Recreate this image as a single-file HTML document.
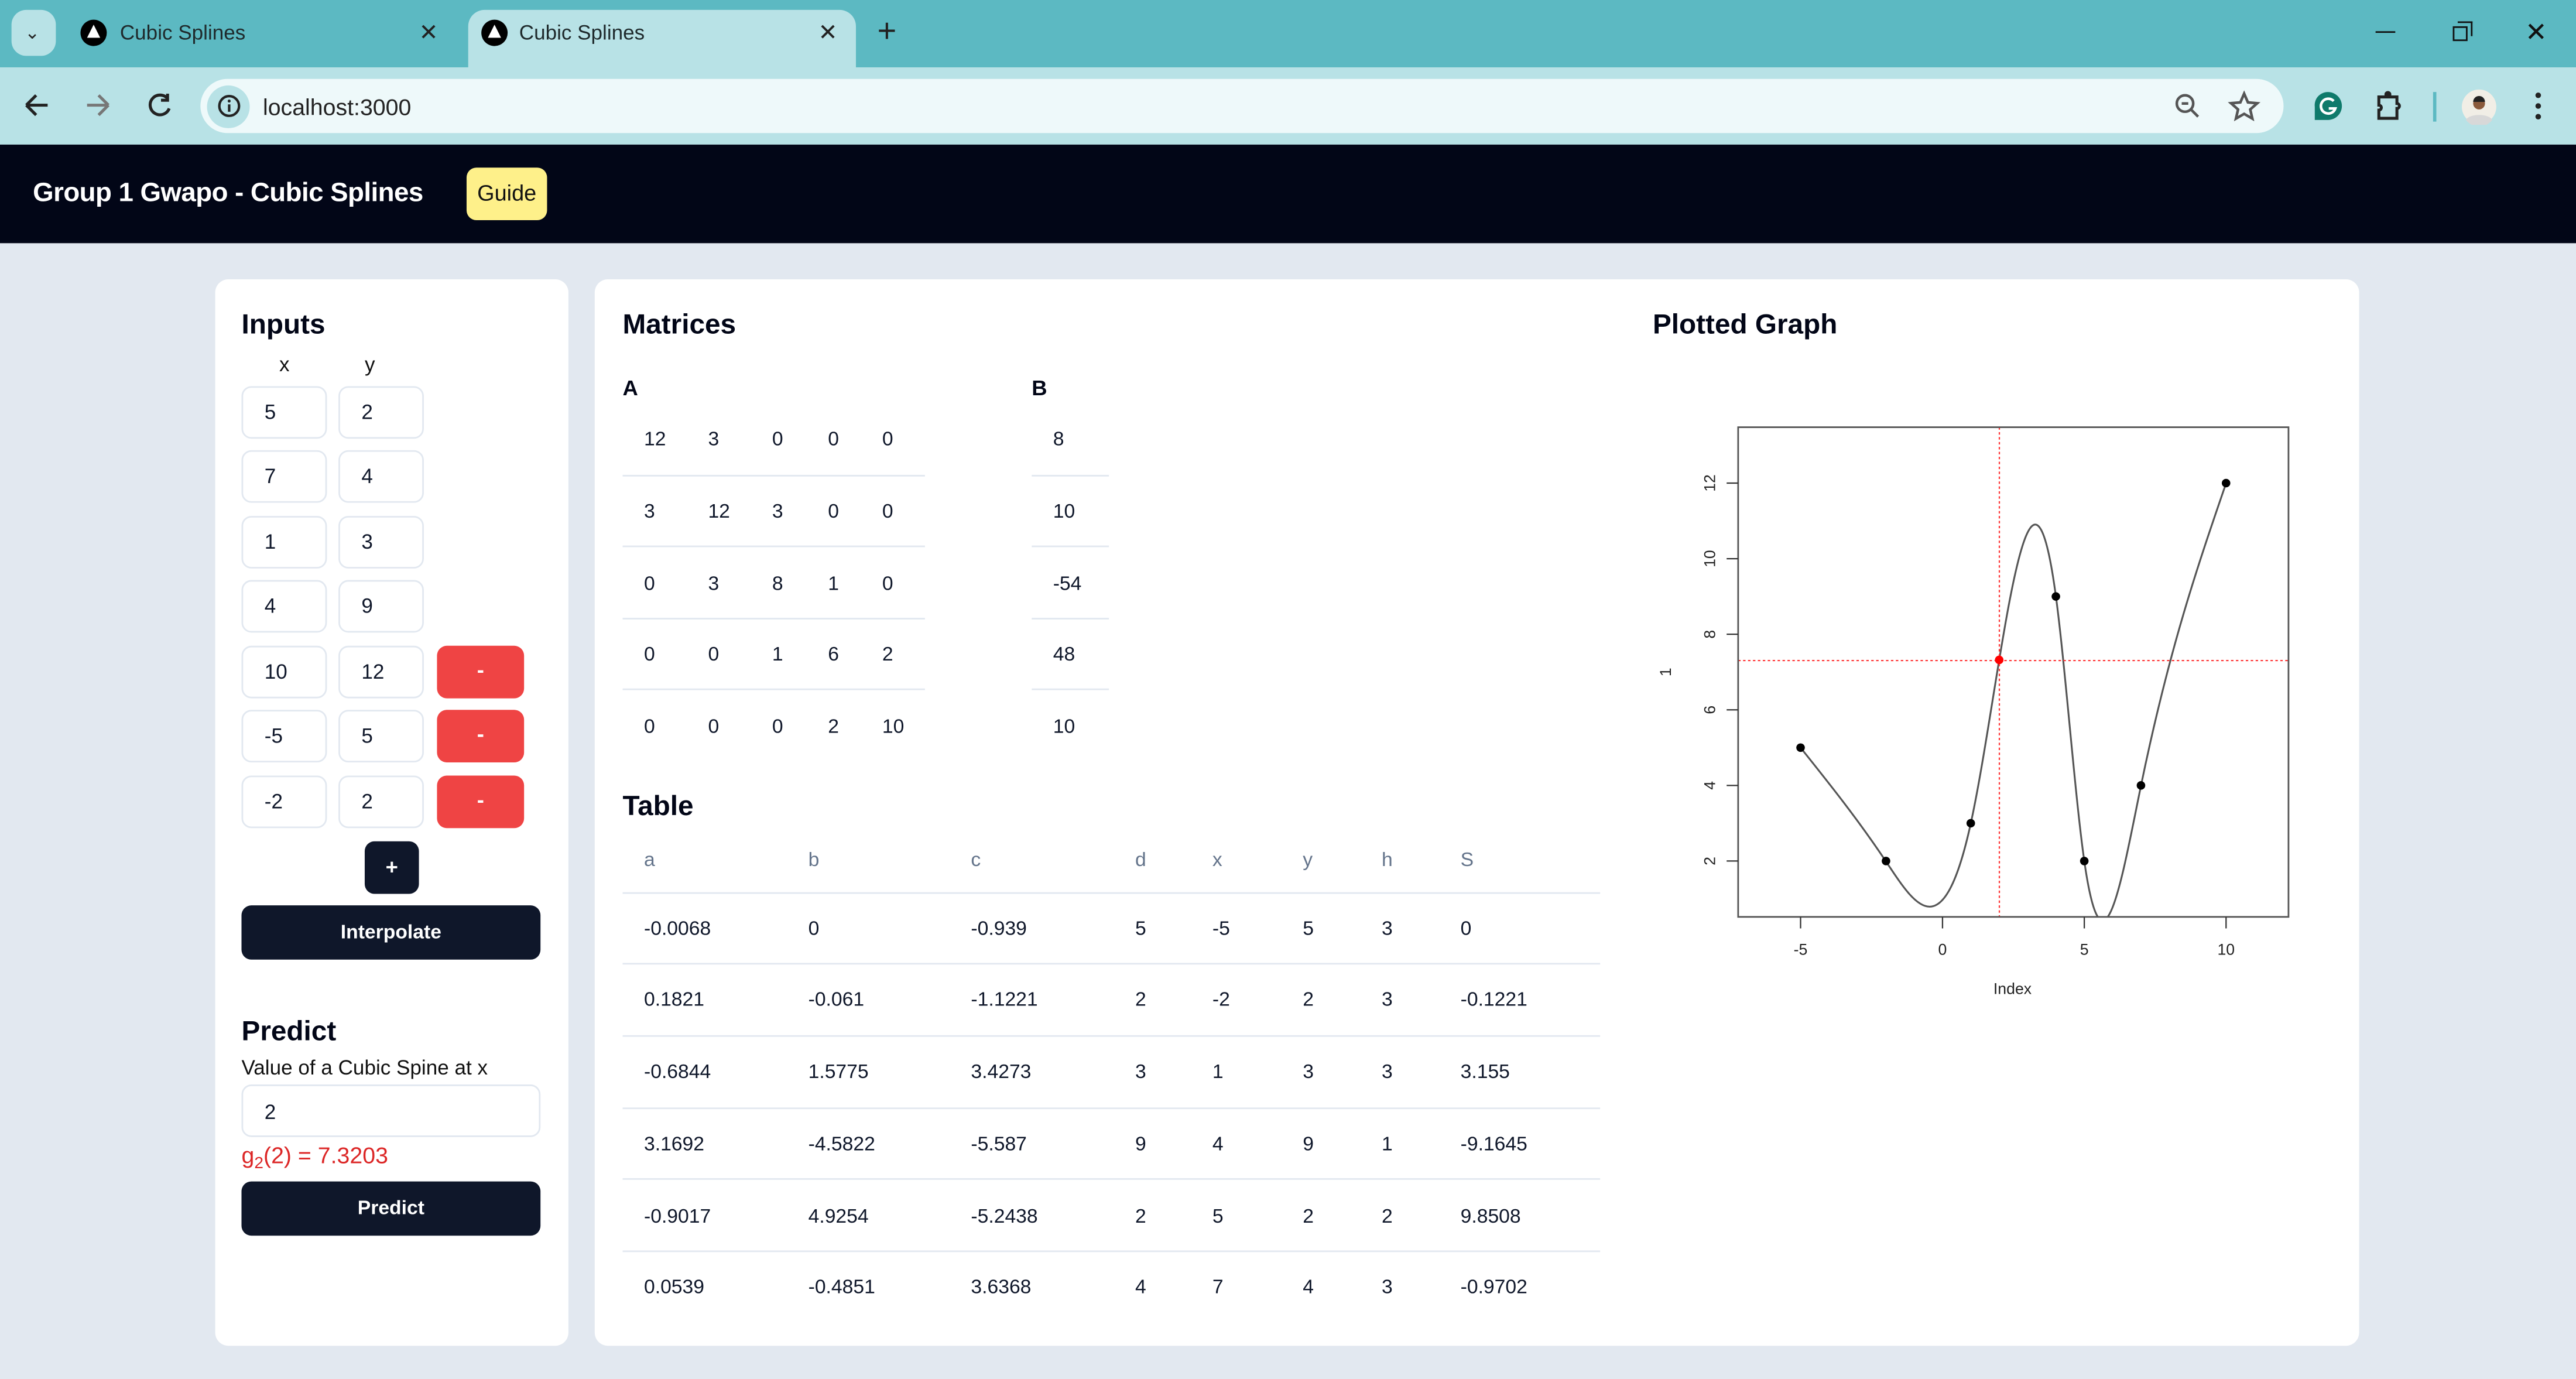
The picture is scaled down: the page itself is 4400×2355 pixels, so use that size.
<!DOCTYPE html>
<html><head><meta charset="utf-8"><style>
*{margin:0;padding:0;box-sizing:border-box}
html,body{width:4400px;height:2355px;overflow:hidden;background:#e2e8f0}
#w{position:absolute;left:0;top:0;width:1568px;height:839.3px;transform:scale(2.80612);transform-origin:0 0;font-family:"Liberation Sans",Arial,sans-serif;background:#e2e8f0}
.a{position:absolute}
.t{position:absolute;white-space:nowrap;transform:translateY(-50%)}
.card{position:absolute;background:#fff;border-radius:8px}
.in{position:absolute;width:52px;height:32px;border:1px solid #e2e8f0;border-radius:6px;font-size:12.5px;color:#0f172a;padding-left:13px;line-height:30px}
.red{position:absolute;left:266px;width:53px;height:32px;background:#ef4444;border-radius:6px;color:#fff;text-align:center;line-height:30px;font-size:13px;font-weight:bold}
.btn{position:absolute;background:#0f172a;border-radius:6px;color:#fff;text-align:center;font-weight:bold;font-size:12px}
.h{font-weight:bold;font-size:17px;color:#020617}
.n{font-size:12px;color:#0f172a}
.g{font-size:12px;color:#64748b}
.ln{position:absolute;height:1px;background:#e2e8f0}
</style></head><body><div id="w">
<!-- browser chrome -->
<div class="a" style="left:0;top:0;width:1568px;height:41px;background:#5cb9c2"></div>
<div class="a" style="left:7px;top:6px;width:27px;height:28px;background:#b8e2e6;border-radius:9px"></div>
<div class="t" style="left:15px;top:20px;font-size:11px;color:#222">&#8964;</div>
<div class="a" style="left:285px;top:6px;width:236px;height:40px;background:#b8e2e6;border-radius:10px 10px 0 0"></div>
<svg class="a" style="left:48px;top:11px" width="18" height="18"><circle cx="9" cy="9" r="8" fill="#000"/><path d="M9 4 L13 12 H5Z" fill="#fff"/></svg>
<svg class="a" style="left:292px;top:11px" width="18" height="18"><circle cx="9" cy="9" r="8" fill="#000"/><path d="M9 4 L13 12 H5Z" fill="#fff"/></svg>
<div class="t" style="left:73px;top:20px;font-size:12.5px;color:#1f2a2c">Cubic Splines</div>
<div class="t" style="left:316px;top:20px;font-size:12.5px;color:#1f2a2c">Cubic Splines</div>
<div class="t" style="left:255px;top:20px;font-size:14px;color:#222">&#10005;</div>
<div class="t" style="left:498px;top:20px;font-size:14px;color:#222">&#10005;</div>
<div class="t" style="left:534px;top:20px;font-size:20px;color:#222">+</div>
<div class="a" style="left:1446px;top:19px;width:12px;height:1.3px;background:#111"></div>
<div class="a" style="left:1493px;top:16px;width:9px;height:9px;border:1.2px solid #111"></div>
<div class="a" style="left:1496px;top:13px;width:9px;height:9px;border-top:1.2px solid #111;border-right:1.2px solid #111"></div>
<div class="t" style="left:1537px;top:20px;font-size:16px;color:#111">&#10005;</div>
<div class="a" style="left:0;top:41px;width:1568px;height:47px;background:#b8e2e6"></div>
<svg class="a" style="left:12px;top:55px" width="100" height="20" fill="none" stroke="#222" stroke-width="1.8"><path d="M4 9H17M4 9L10 3M4 9L10 15"/><path d="M41 9H54M54 9L48 3M54 9L48 15" stroke="#777"/><path d="M90 5A6 6 0 1 0 91 11M90 2V6H86"/></svg>
<div class="a" style="left:122px;top:48px;width:1268px;height:33px;background:#eef9fa;border-radius:17px"></div>
<div class="a" style="left:126px;top:52px;width:26px;height:26px;background:#b8e2e6;border-radius:13px"></div>
<svg class="a" style="left:132px;top:57px" width="15" height="15"><circle cx="7.5" cy="7.5" r="6" fill="none" stroke="#222" stroke-width="1.5"/><path d="M7.5 6.5V11" stroke="#222" stroke-width="1.5"/><circle cx="7.5" cy="4.5" r="0.9" fill="#222"/></svg>
<div class="t" style="left:160px;top:65px;font-size:14px;color:#222">localhost:3000</div>
<svg class="a" style="left:1322px;top:55px" width="20" height="20" fill="none" stroke="#555" stroke-width="1.6"><circle cx="8" cy="8" r="5"/><path d="M6 8H10M12 12L16 16"/></svg>
<svg class="a" style="left:1356px;top:55px" width="20" height="20" fill="none" stroke="#555" stroke-width="1.6"><path d="M10 2L12.3 7.3 18 7.8 13.7 11.6 15 17.2 10 14.3 5 17.2 6.3 11.6 2 7.8 7.7 7.3Z"/></svg>
<svg class="a" style="left:1407px;top:55px" width="20" height="20"><path d="M10 1A8.5 8.5 0 1 1 10 18H2V10A8 8 0 0 1 10 1Z" fill="#0f7a6b"/><path d="M13.5 6.5A4.5 4.5 0 1 0 14.5 11H10.5" fill="none" stroke="#fff" stroke-width="1.6"/></svg>
<svg class="a" style="left:1444px;top:54px" width="22" height="22" fill="none" stroke="#222" stroke-width="1.8"><path d="M4 5H15V9A1.5 1.5 0 0 1 15 12V18H4V13A1.5 1.5 0 0 0 4 10Z"/><circle cx="9.5" cy="3.5" r="1.2" fill="#222"/></svg>
<div class="a" style="left:1481px;top:56px;width:1.5px;height:18px;background:#5cb9c2"></div>
<svg class="a" style="left:1498px;top:54px" width="22" height="22"><circle cx="11" cy="11" r="10.5" fill="#f1eee6"/><path d="M3 19C5 15 17 15 19 19A10 10 0 0 1 3 19Z" fill="#d8d8d8"/><circle cx="11" cy="9" r="3.6" fill="#8a5a3c"/><path d="M7.4 8A3.6 3.6 0 0 1 14.6 8Z" fill="#222"/></svg>
<svg class="a" style="left:1540px;top:55px" width="10" height="20" fill="#222"><circle cx="5" cy="3" r="1.7"/><circle cx="5" cy="9.5" r="1.7"/><circle cx="5" cy="16" r="1.7"/></svg>
<!-- header -->
<div class="a" style="left:0;top:88px;width:1568px;height:60px;background:#020617"></div>
<div class="t" style="left:20px;top:118px;font-size:16.3px;font-weight:bold;color:#fff;letter-spacing:-0.2px">Group 1 Gwapo - Cubic Splines</div>
<div class="a" style="left:284px;top:102px;width:49px;height:32px;background:#fef08a;border-radius:6px;font-size:13.5px;color:#111;text-align:center;line-height:32px">Guide</div>
<!-- left card -->
<div class="card" style="left:131px;top:170px;width:215px;height:649px"></div>
<div class="t h" style="left:147px;top:198px">Inputs</div>
<div class="t" style="left:170px;top:222px;font-size:12.5px;color:#111">x</div>
<div class="t" style="left:222px;top:222px;font-size:12.5px;color:#111">y</div>
<div class="in" style="left:147px;top:235px">5</div><div class="in" style="left:206px;top:235px">2</div>
<div class="in" style="left:147px;top:274px">7</div><div class="in" style="left:206px;top:274px">4</div>
<div class="in" style="left:147px;top:314px">1</div><div class="in" style="left:206px;top:314px">3</div>
<div class="in" style="left:147px;top:353px">4</div><div class="in" style="left:206px;top:353px">9</div>
<div class="in" style="left:147px;top:393px">10</div><div class="in" style="left:206px;top:393px">12</div><div class="red" style="top:393px">-</div>
<div class="in" style="left:147px;top:432px">-5</div><div class="in" style="left:206px;top:432px">5</div><div class="red" style="top:432px">-</div>
<div class="in" style="left:147px;top:472px">-2</div><div class="in" style="left:206px;top:472px">2</div><div class="red" style="top:472px">-</div>
<div class="btn" style="left:222px;top:512px;width:33px;height:32px;line-height:31px;font-size:13px">+</div>
<div class="btn" style="left:147px;top:551px;width:182px;height:33px;line-height:33px">Interpolate</div>
<div class="t h" style="left:147px;top:628px">Predict</div>
<div class="t" style="left:147px;top:650px;font-size:12.5px;color:#111">Value of a Cubic Spine at x</div>
<div class="in" style="left:147px;top:660px;width:182px;height:32px;line-height:32px">2</div>
<div class="t" style="left:147px;top:703px;font-size:14px;color:#dc2626">g<span style="font-size:10px;position:relative;top:3px">2</span>(2) = 7.3203</div>
<div class="btn" style="left:147px;top:719px;width:182px;height:33px;line-height:33px">Predict</div>
<!-- right card -->
<div class="card" style="left:362px;top:170px;width:1074px;height:649px"></div>
<div class="t h" style="left:379px;top:198px">Matrices</div>
<div class="t" style="left:379px;top:236px;font-size:13px;font-weight:bold;color:#020617">A</div>
<div class="t" style="left:628px;top:236px;font-size:13px;font-weight:bold;color:#020617">B</div>
<div class="ln" style="left:379px;top:289px;width:184px"></div><div class="ln" style="left:628px;top:289px;width:47px"></div>
<div class="ln" style="left:379px;top:332px;width:184px"></div><div class="ln" style="left:628px;top:332px;width:47px"></div>
<div class="ln" style="left:379px;top:376px;width:184px"></div><div class="ln" style="left:628px;top:376px;width:47px"></div>
<div class="ln" style="left:379px;top:419px;width:184px"></div><div class="ln" style="left:628px;top:419px;width:47px"></div>
<div class="n">
<div class="t" style="left:392px;top:267px">12</div><div class="t" style="left:431px;top:267px">3</div><div class="t" style="left:470px;top:267px">0</div><div class="t" style="left:504px;top:267px">0</div><div class="t" style="left:537px;top:267px">0</div><div class="t" style="left:641px;top:267px">8</div>
<div class="t" style="left:392px;top:311px">3</div><div class="t" style="left:431px;top:311px">12</div><div class="t" style="left:470px;top:311px">3</div><div class="t" style="left:504px;top:311px">0</div><div class="t" style="left:537px;top:311px">0</div><div class="t" style="left:641px;top:311px">10</div>
<div class="t" style="left:392px;top:355px">0</div><div class="t" style="left:431px;top:355px">3</div><div class="t" style="left:470px;top:355px">8</div><div class="t" style="left:504px;top:355px">1</div><div class="t" style="left:537px;top:355px">0</div><div class="t" style="left:641px;top:355px">-54</div>
<div class="t" style="left:392px;top:398px">0</div><div class="t" style="left:431px;top:398px">0</div><div class="t" style="left:470px;top:398px">1</div><div class="t" style="left:504px;top:398px">6</div><div class="t" style="left:537px;top:398px">2</div><div class="t" style="left:641px;top:398px">48</div>
<div class="t" style="left:392px;top:442px">0</div><div class="t" style="left:431px;top:442px">0</div><div class="t" style="left:470px;top:442px">0</div><div class="t" style="left:504px;top:442px">2</div><div class="t" style="left:537px;top:442px">10</div><div class="t" style="left:641px;top:442px">10</div>
</div>
<div class="t h" style="left:379px;top:491px">Table</div>
<div class="g">
<div class="t" style="left:392px;top:523px">a</div><div class="t" style="left:492px;top:523px">b</div><div class="t" style="left:591px;top:523px">c</div><div class="t" style="left:691px;top:523px">d</div><div class="t" style="left:738px;top:523px">x</div><div class="t" style="left:793px;top:523px">y</div><div class="t" style="left:841px;top:523px">h</div><div class="t" style="left:889px;top:523px">S</div>
</div>
<div class="ln" style="left:379px;top:543px;width:595px"></div>
<div class="ln" style="left:379px;top:586px;width:595px"></div>
<div class="ln" style="left:379px;top:630px;width:595px"></div>
<div class="ln" style="left:379px;top:674px;width:595px"></div>
<div class="ln" style="left:379px;top:717px;width:595px"></div>
<div class="ln" style="left:379px;top:761px;width:595px"></div>
<div class="n">
<div class="t" style="left:392px;top:565px">-0.0068</div><div class="t" style="left:492px;top:565px">0</div><div class="t" style="left:591px;top:565px">-0.939</div><div class="t" style="left:691px;top:565px">5</div><div class="t" style="left:738px;top:565px">-5</div><div class="t" style="left:793px;top:565px">5</div><div class="t" style="left:841px;top:565px">3</div><div class="t" style="left:889px;top:565px">0</div>
<div class="t" style="left:392px;top:608px">0.1821</div><div class="t" style="left:492px;top:608px">-0.061</div><div class="t" style="left:591px;top:608px">-1.1221</div><div class="t" style="left:691px;top:608px">2</div><div class="t" style="left:738px;top:608px">-2</div><div class="t" style="left:793px;top:608px">2</div><div class="t" style="left:841px;top:608px">3</div><div class="t" style="left:889px;top:608px">-0.1221</div>
<div class="t" style="left:392px;top:652px">-0.6844</div><div class="t" style="left:492px;top:652px">1.5775</div><div class="t" style="left:591px;top:652px">3.4273</div><div class="t" style="left:691px;top:652px">3</div><div class="t" style="left:738px;top:652px">1</div><div class="t" style="left:793px;top:652px">3</div><div class="t" style="left:841px;top:652px">3</div><div class="t" style="left:889px;top:652px">3.155</div>
<div class="t" style="left:392px;top:696px">3.1692</div><div class="t" style="left:492px;top:696px">-4.5822</div><div class="t" style="left:591px;top:696px">-5.587</div><div class="t" style="left:691px;top:696px">9</div><div class="t" style="left:738px;top:696px">4</div><div class="t" style="left:793px;top:696px">9</div><div class="t" style="left:841px;top:696px">1</div><div class="t" style="left:889px;top:696px">-9.1645</div>
<div class="t" style="left:392px;top:740px">-0.9017</div><div class="t" style="left:492px;top:740px">4.9254</div><div class="t" style="left:591px;top:740px">-5.2438</div><div class="t" style="left:691px;top:740px">2</div><div class="t" style="left:738px;top:740px">5</div><div class="t" style="left:793px;top:740px">2</div><div class="t" style="left:841px;top:740px">2</div><div class="t" style="left:889px;top:740px">9.8508</div>
<div class="t" style="left:392px;top:783px">0.0539</div><div class="t" style="left:492px;top:783px">-0.4851</div><div class="t" style="left:591px;top:783px">3.6368</div><div class="t" style="left:691px;top:783px">4</div><div class="t" style="left:738px;top:783px">7</div><div class="t" style="left:793px;top:783px">4</div><div class="t" style="left:841px;top:783px">3</div><div class="t" style="left:889px;top:783px">-0.9702</div>
</div>
<div class="t h" style="left:1006px;top:198px">Plotted Graph</div>
<!-- plot -->
<svg class="a" style="left:0;top:0" width="1568" height="839" font-family="Liberation Sans, Arial, sans-serif">
<defs><clipPath id="c"><rect x="1058" y="260" width="335" height="298"/></clipPath></defs>
<g clip-path="url(#c)">
<path transform="matrix(17.27 0 0 -23 1182.35 570)" vector-effect="non-scaling-stroke" fill="none" stroke="#555" stroke-width="1.1"
d="M-5 5C-4 4.061 -3 3.122 -2 2C-1 0.8779 0 -0.4272 1 3C2 6.4273 3 14.587 4 9C4.333 7.1377 4.667 3.748 5 2C5.667 -1.4959 6.333 1.5755 7 4C8 7.6368 9 9.8183 10 12"/>
<line x1="1217" y1="260" x2="1217" y2="558" stroke="#f33" stroke-width="0.8" stroke-dasharray="1.5 1.5"/>
<line x1="1058" y1="402" x2="1393" y2="402" stroke="#f33" stroke-width="0.8" stroke-dasharray="1.5 1.5"/>
</g>
<rect x="1058" y="260" width="335" height="298" fill="none" stroke="#555" stroke-width="1"/>
<g fill="#000"><circle cx="1096" cy="455" r="2.6"/><circle cx="1148" cy="524" r="2.6"/><circle cx="1199.6" cy="501" r="2.6"/><circle cx="1251.4" cy="363" r="2.6"/><circle cx="1268.7" cy="524" r="2.6"/><circle cx="1303.2" cy="478" r="2.6"/><circle cx="1355" cy="294" r="2.6"/></g>
<circle cx="1216.9" cy="401.6" r="2.6" fill="#f00"/>
<g stroke="#333" stroke-width="0.8"><path d="M1096 558V565M1182.4 558V565M1268.7 558V565M1355 558V565"/><path d="M1058 524H1051M1058 478H1051M1058 432H1051M1058 386H1051M1058 340H1051M1058 294H1051"/></g>
<g font-size="9.5" fill="#222" text-anchor="middle">
<text x="1096" y="581">-5</text><text x="1182.4" y="581">0</text><text x="1268.7" y="581">5</text><text x="1355" y="581">10</text>
<text x="1225" y="605">Index</text>
<text transform="translate(1044 524) rotate(-90)">2</text><text transform="translate(1044 478) rotate(-90)">4</text><text transform="translate(1044 432) rotate(-90)">6</text><text transform="translate(1044 386) rotate(-90)">8</text><text transform="translate(1044 340) rotate(-90)">10</text><text transform="translate(1044 294) rotate(-90)">12</text>
<text transform="translate(1017 409) rotate(-90)">1</text>
</g>
</svg>
</div></body></html>
